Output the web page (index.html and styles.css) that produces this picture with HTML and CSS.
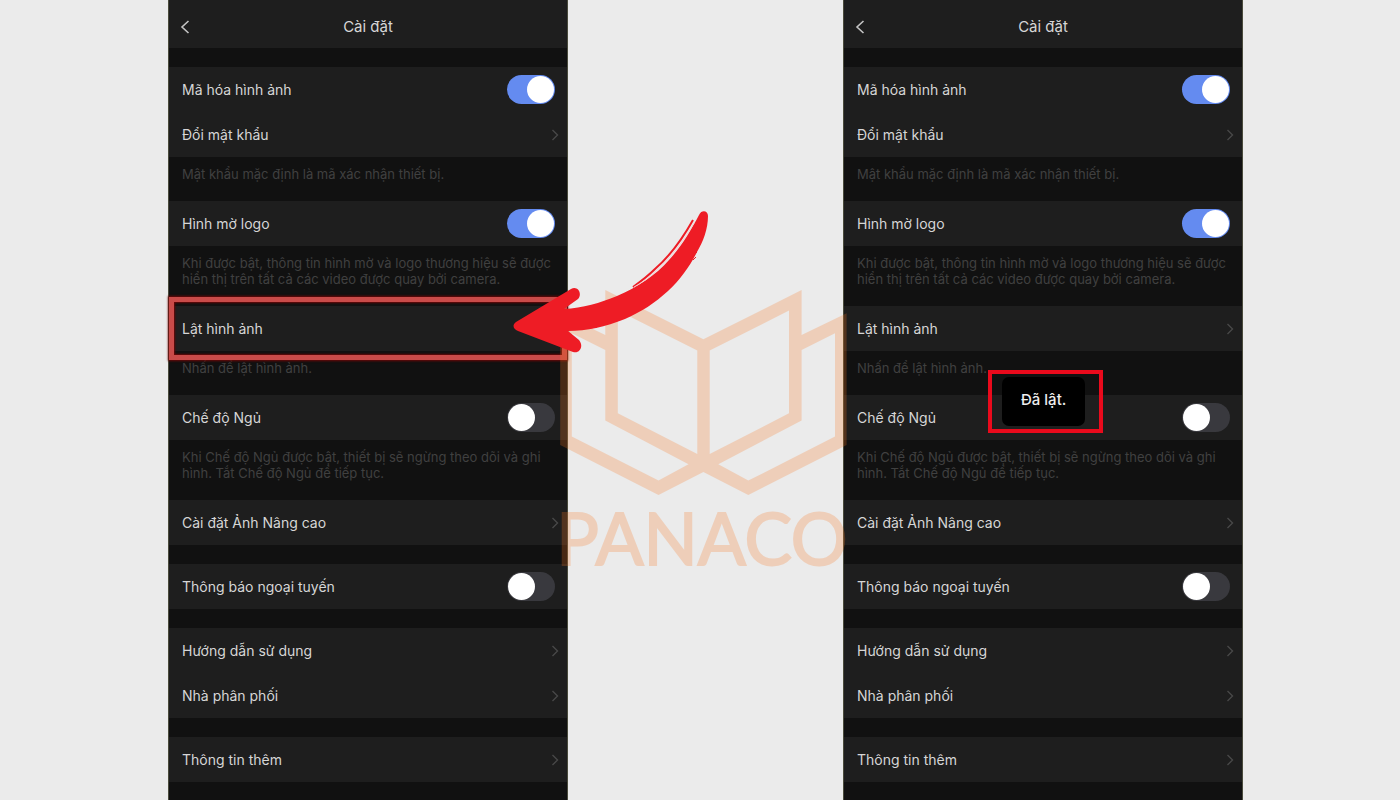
FILE: index.html
```html
<!DOCTYPE html>
<html lang="vi">
<head>
<meta charset="utf-8">
<meta name="viewport" content="width=device-width, initial-scale=1">
<title>Cài đặt</title>
<link rel="stylesheet" href="styles.css">
</head>
<body>
<svg class="defs" aria-hidden="true">
  <symbol id="chevron" viewBox="0 0 8 14"><path d="M1.500 2 6.500 7 1.500 12" fill="none" stroke="currentColor" stroke-width="1.4"/></symbol>
  <symbol id="back" viewBox="0 0 10 16"><path d="M8.500 2 2 8l6.500 6" fill="none" stroke="currentColor" stroke-width="1.6"/></symbol>
</svg>
<main class="stage">
  <section class="phone phone-before">
    <header class="bar">
      <button class="back" type="button" aria-label="Quay lại"><svg><use href="#back"/></svg></button>
      <h1 class="title">Cài đặt</h1>
    </header>
    <div class="group">
      <label class="row">Mã hóa hình ảnh<input class="switch" type="checkbox" checked></label>
      <a class="row" href="#">Đổi mật khẩu<svg class="chevron"><use href="#chevron"/></svg></a>
    </div>
    <p class="note">Mật khẩu mặc định là mã xác nhận thiết bị.</p>
    <div class="group">
      <label class="row">Hình mờ logo<input class="switch" type="checkbox" checked></label>
    </div>
    <p class="note">Khi được bật, thông tin hình mờ và logo thương hiệu sẽ được<br>hiển thị trên tất cả các video được quay bởi camera.</p>
    <div class="group">
      <a class="row row-marked" href="#">Lật hình ảnh</a>
    </div>
    <p class="note">Nhấn để lật hình ảnh.</p>
    <div class="group">
      <label class="row">Chế độ Ngủ<input class="switch" type="checkbox"></label>
    </div>
    <p class="note">Khi Chế độ Ngủ được bật, thiết bị sẽ ngừng theo dõi và ghi<br>hình. Tắt Chế độ Ngủ để tiếp tục.</p>
    <div class="group">
      <a class="row" href="#">Cài đặt Ảnh Nâng cao<svg class="chevron"><use href="#chevron"/></svg></a>
    </div>
    <div class="group spaced">
      <label class="row">Thông báo ngoại tuyến<input class="switch" type="checkbox"></label>
    </div>
    <div class="group spaced">
      <a class="row" href="#">Hướng dẫn sử dụng<svg class="chevron"><use href="#chevron"/></svg></a>
      <a class="row" href="#">Nhà phân phối<svg class="chevron"><use href="#chevron"/></svg></a>
    </div>
    <div class="group spaced">
      <a class="row" href="#">Thông tin thêm<svg class="chevron"><use href="#chevron"/></svg></a>
    </div>
  </section>

  <div class="gutter">
    <svg class="watermark" viewBox="549 288 310 302" role="img" aria-label="PANACO">
      <g class="brand">
        <path fill-rule="evenodd" d="M605.3 290 703.4 339.3 801.6 290V335L846.600 313.300V445L748.300 495 703.400 472 658.500 495 560.200 445V313.300L605.300 335Z
          M617.800 310.600V413.300L697.300 454V350.600Z
          M789 310.600V413.300L709.700 454V350.600Z
          M801.600 350 835 333.300V436.600L748.300 480.600 718.300 464.300 801.600 420.600Z
          M605.300 350 571.800 333.300V436.600L658.500 480.600 688.500 464.300 605.300 420.600Z"/>
        <text x="702" y="565" text-anchor="middle">PANACO</text>
      </g>
    </svg>
    <svg class="arrow" viewBox="510 208 202 148" aria-hidden="true">
      <path class="ink" d="M516 322 571 289C577 285 583 293 578 299L564 309C583 308 600 303 617 296C638 287 656 275 669 260C682 246 691 230 699 215C702 209 708 211 708 216C708 229 703 242 697 252C690 266 680 280 668 291C655 303 641 312 625 319C605 327 587 331 568 331L579 340C584 346 580 354 573 352L518 331C513 329 512 325 516 322Z"/>
      <path class="edge" d="M693 220C684 236 670 256 655 269C648 276 640 282 633 287"/>
      <path class="scratch" d="M694 223C685 239 671 258 656 271C649 278 641 283 634 287"/>
      <path class="bristle" d="M692 256 697 252M693 260 696 257M590 328 597 327"/>
    </svg>
  </div>

  <section class="phone phone-after">
    <header class="bar">
      <button class="back" type="button" aria-label="Quay lại"><svg><use href="#back"/></svg></button>
      <h1 class="title">Cài đặt</h1>
    </header>
    <div class="group">
      <label class="row">Mã hóa hình ảnh<input class="switch" type="checkbox" checked></label>
      <a class="row" href="#">Đổi mật khẩu<svg class="chevron"><use href="#chevron"/></svg></a>
    </div>
    <p class="note">Mật khẩu mặc định là mã xác nhận thiết bị.</p>
    <div class="group">
      <label class="row">Hình mờ logo<input class="switch" type="checkbox" checked></label>
    </div>
    <p class="note">Khi được bật, thông tin hình mờ và logo thương hiệu sẽ được<br>hiển thị trên tất cả các video được quay bởi camera.</p>
    <div class="group">
      <a class="row" href="#">Lật hình ảnh<svg class="chevron"><use href="#chevron"/></svg></a>
    </div>
    <p class="note">Nhấn để lật hình ảnh.</p>
    <div class="group">
      <label class="row">Chế độ Ngủ<input class="switch" type="checkbox"></label>
    </div>
    <p class="note">Khi Chế độ Ngủ được bật, thiết bị sẽ ngừng theo dõi và ghi<br>hình. Tắt Chế độ Ngủ để tiếp tục.</p>
    <div class="group">
      <a class="row" href="#">Cài đặt Ảnh Nâng cao<svg class="chevron"><use href="#chevron"/></svg></a>
    </div>
    <div class="group spaced">
      <label class="row">Thông báo ngoại tuyến<input class="switch" type="checkbox"></label>
    </div>
    <div class="group spaced">
      <a class="row" href="#">Hướng dẫn sử dụng<svg class="chevron"><use href="#chevron"/></svg></a>
      <a class="row" href="#">Nhà phân phối<svg class="chevron"><use href="#chevron"/></svg></a>
    </div>
    <div class="group spaced">
      <a class="row" href="#">Thông tin thêm<svg class="chevron"><use href="#chevron"/></svg></a>
    </div>
    <div class="toast-frame"><div class="toast" role="status">Đã lật.</div></div>
  </section>
</main>
</body>
</html>
```
FILE: styles.css
```css
* { box-sizing: border-box; }
body {
  margin: 0;
  background: #ebebeb;
  color: #d6d6d6;
  font-family: Inter, "Noto Sans", sans-serif;
  font-size: 14px;
}
.defs { display: none; }
.stage {
  display: grid;
  grid-template-columns: 168fr 400fr 275fr 400fr 157fr;
  min-height: 100vh;
}
.phone {
  position: relative;
  background: #111;
  border: solid #4a4b3c;
  border-width: 0 1px;
}
.phone-before { grid-column: 2; }
.gutter { grid-column: 3; position: relative; z-index: 2; pointer-events: none; }
.phone-after { grid-column: 4; }

.bar {
  display: grid;
  grid-template-columns: 32px 1fr 32px;
  align-items: center;
  height: 48px;
  padding-top: 6px;
  margin-bottom: 19px;
  background: #1e1e1e;
}
.back { display: flex; padding: 0 0 0 11px; border: 0; background: none; color: #c4c4c4; }
.back svg { width: 10px; height: 16px; }
.title { margin: 0; font-size: 15px; font-weight: 400; line-height: 18px; text-align: center; }

.group { background: #1e1e1e; }
.spaced { margin-top: 19px; }
.row {
  position: relative;
  display: flex;
  align-items: center;
  justify-content: space-between;
  height: 45px;
  padding: 0 12px 0 13px;
  color: inherit;
  text-decoration: none;
}
.row-marked::after {
  content: "";
  position: absolute;
  inset: -9px 0;
  border: 5px solid #c94b49;
  box-shadow: 0 0 2px 1px #6d0707, inset 0 0 2px 1px #6d0707;
}
.chevron { width: 8px; height: 14px; margin-right: -4px; color: #484848; }
.switch {
  appearance: none;
  display: flex;
  width: 48px;
  height: 29px;
  margin: 0;
  padding: 1px;
  border-radius: 15px;
  background: #39393e;
}
.switch::before {
  content: "";
  width: 27px;
  height: 27px;
  border-radius: 50%;
  background: #fff;
}
.switch:checked { justify-content: flex-end; background: #648bf0; }

.note {
  margin: 0;
  padding: 9px 13px 19px;
  color: #404040;
  font-size: 13px;
  line-height: 16px;
  white-space: nowrap;
}

.toast-frame {
  position: absolute;
  top: 370px;
  left: 144px;
  display: flex;
  padding: 3px 14px 3px 10px;
  border: 4px solid #ea0a1c;
}
.toast {
  padding: 14px 19px 18px;
  border-radius: 7px;
  background: #000;
  color: #eee;
  font-size: 15px;
  font-weight: 500;
  line-height: 17px;
}

.watermark { position: absolute; top: 288px; left: -19px; width: 310px; height: 302px; }
.brand { fill: #fa761f; opacity: 0.24; }
.brand text { font-family: Lato, sans-serif; font-size: 71px; stroke: #fa761f; stroke-width: 2; }
.arrow { position: absolute; top: 208px; left: -58px; width: 202px; height: 148px; }
.ink { fill: #ee1c25; }
.edge { fill: none; stroke: #ee1c25; stroke-width: 2; }
.scratch { fill: none; stroke: #f6d0d1; stroke-width: 0.9; }
.bristle { fill: none; stroke: #ee1c25; stroke-width: 1; }
```
